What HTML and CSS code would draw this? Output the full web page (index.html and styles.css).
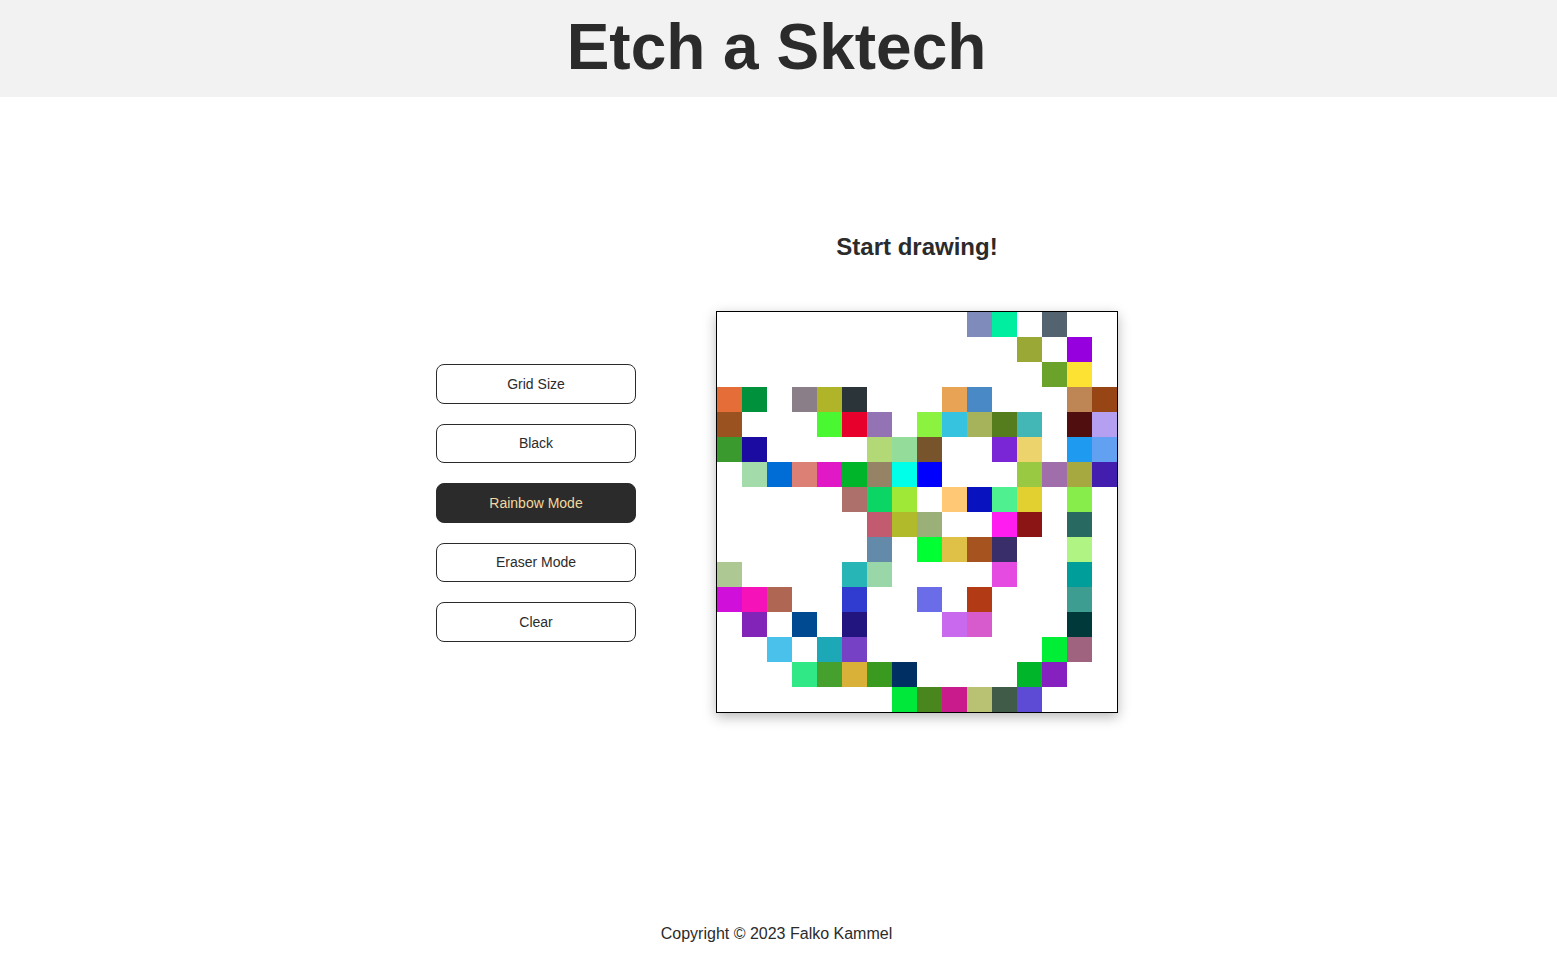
FILE: index.html
```html
<!DOCTYPE html>
<html lang="en">
<head>
<meta charset="utf-8">
<title>Etch a Sketch</title>
<link rel="stylesheet" href="styles.css">
</head>
<body>
<header class="site-header">
  <h1 class="title">Etch a Sktech</h1>
</header>
<main class="main">
  <div class="controls">
    <button class="btn">Grid Size</button>
    <button class="btn">Black</button>
    <button class="btn btn-active">Rainbow Mode</button>
    <button class="btn">Eraser Mode</button>
    <button class="btn">Clear</button>
  </div>
  <div class="board">
    <h2 class="subtitle">Start drawing!</h2>
    <div class="grid" id="grid"></div>
  </div>
</main>
<footer class="footer">Copyright © 2023 Falko Kammel</footer>
<script src="script.js"></script>
</body>
</html>
```

FILE: script.js
```js
const rows = [
  {10:'#7F8BBA',11:'#00EEA0',13:'#536470'},
  {12:'#9AA935',14:'#9600DE'},
  {13:'#6BA22A',14:'#FDE233'},
  {0:'#E56D37',1:'#00913D',3:'#8A7F88',4:'#B0B429',5:'#2B3439',9:'#E8A354',10:'#4889C6',14:'#BD8654',15:'#974515'},
  {0:'#9A5221',4:'#4AF832',5:'#E8002D',6:'#9373B3',8:'#8BF23F',9:'#36C3DF',10:'#A7B35B',11:'#557D1E',12:'#43B7B6',14:'#500E0E',15:'#B49FF1'},
  {0:'#3A9A2E',1:'#1C0BA0',6:'#B3D876',7:'#93DC9A',8:'#77542C',11:'#7A26D6',12:'#EDD36B',14:'#1E9AF0',15:'#62A1F1'},
  {1:'#A4DBAA',2:'#006CD6',3:'#DC8075',4:'#E018C6',5:'#00B52A',6:'#968365',7:'#00FFE8',8:'#0000FF',12:'#99C943',13:'#A06EAA',14:'#A6A840',15:'#431EAE'},
  {5:'#AD706B',6:'#0AD565',7:'#A0E838',9:'#FEC875',10:'#0812BE',11:'#4EF090',12:'#E2CF30',14:'#87ED4B'},
  {6:'#C25A70',7:'#B0BA2A',8:'#9AB078',11:'#FF1CF0',12:'#8B1414',14:'#286962'},
  {6:'#638AA8',8:'#00FF33',9:'#E0C148',10:'#A6531F',11:'#392D6A',14:'#B0F583'},
  {0:'#AEC894',5:'#28B5B5',6:'#9AD7A8',11:'#E54BE0',14:'#009E9A'},
  {0:'#D010DA',1:'#F512B8',2:'#AF6652',5:'#303BD0',8:'#6B6DE8',10:'#B23B16',14:'#3D9D90'},
  {1:'#8224B8',3:'#004A92',5:'#23157F',9:'#C96AEE',10:'#D75BCD',14:'#00393A'},
  {2:'#4AC1EA',4:'#1CA8B6',5:'#7641C5',13:'#00EE36',14:'#A0637F'},
  {3:'#30E885',4:'#45A02E',5:'#D9B038',6:'#3A9A20',7:'#002F63',12:'#00B52A',13:'#8620BE'},
  {7:'#00E83A',8:'#4A861E',9:'#CA1B8C',10:'#B9C172',11:'#405C48',12:'#5D4BD6'}
];
const grid = document.getElementById('grid');
rows.forEach(function (row) {
  for (let c = 0; c < 16; c++) {
    const cell = document.createElement('div');
    cell.className = 'cell';
    if (row[c]) cell.style.backgroundColor = row[c];
    grid.appendChild(cell);
  }
});
```

FILE: styles.css
```css
* {
  box-sizing: border-box;
}

html, body {
  margin: 0;
  padding: 0;
}

body {
  font-family: "Liberation Sans", Arial, sans-serif;
  color: #2b2b2b;
  background: #ffffff;
  min-height: 100vh;
  display: flex;
  flex-direction: column;
}

.site-header {
  background: #f2f2f2;
  height: 97px;
  padding: 10px 4px 0 0;
  text-align: center;
}

.title {
  margin: 0;
  font-size: 64px;
  font-weight: 700;
  line-height: normal;
  color: #2b2b2b;
}

.main {
  flex: 1;
  display: flex;
  justify-content: center;
  align-items: flex-start;
  gap: 80px;
  padding: 136px 3px 0 0;
}

.controls {
  width: 200px;
  margin-top: 131px;
  display: flex;
  flex-direction: column;
  gap: 20px;
}

.btn {
  height: 39.5px;
  width: 200px;
  background: #ffffff;
  color: #2b2b2b;
  border: 1px solid #2b2b2b;
  border-radius: 8px;
  font-family: "Liberation Sans", Arial, sans-serif;
  font-size: 14px;
  padding: 0;
}

.btn-active {
  background: #2b2b2b;
  color: #f0d9a0;
}

.board {
  display: flex;
  flex-direction: column;
  align-items: center;
}

.subtitle {
  margin: 0 0 49.5px;
  font-size: 24px;
  font-weight: 700;
  line-height: normal;
}

.grid {
  display: grid;
  grid-template-columns: repeat(16, 25px);
  grid-template-rows: repeat(16, 25px);
  border: 1px solid #000000;
  box-sizing: content-box;
  background: #ffffff;
  box-shadow: 0 4px 12px rgba(0, 0, 0, 0.28);
}

.cell {
  width: 25px;
  height: 25px;
}

.footer {
  text-align: center;
  font-size: 16px;
  padding: 0 4px 13px 0;
}
```
